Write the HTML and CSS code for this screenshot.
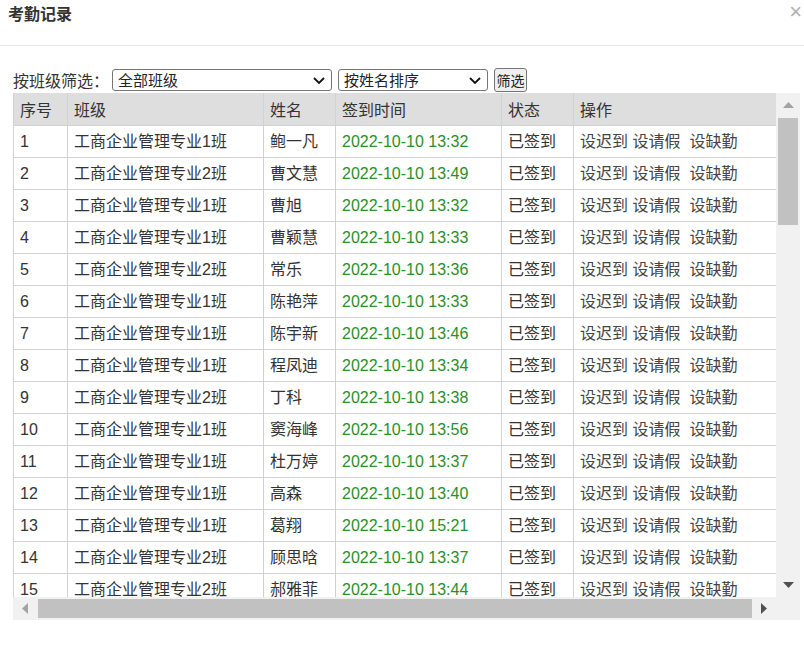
FILE: index.html
```
<!DOCTYPE html>
<html lang="zh-CN">

<head>
    <meta charset="UTF-8">
    <meta name="viewport" content="width=device-width, initial-scale=1.0">
    <title>考勤记录</title>
    <link rel="stylesheet" href="styles.css">
</head>

<body>
    <div class="dialog-head">
        <h3 class="dialog-title">考勤记录</h3>
        <span class="dialog-close">×</span>
    </div>
    <div class="dialog-body">
        <form class="filter-bar">
            <label for="classSelect">按班级筛选：</label>
            <div class="select-wrap">
                <select id="classSelect" class="select-class">
                    <option>全部班级</option>
                    <option>工商企业管理专业1班</option>
                    <option>工商企业管理专业2班</option>
                </select>
                <svg width="12" height="7" viewBox="0 0 12 7"><path d="M1 1l5 5 5-5" fill="none" stroke="#111" stroke-width="1.8"/></svg>
            </div>
            <div class="select-wrap">
                <select class="select-sort">
                    <option>按姓名排序</option>
                    <option>按签到时间排序</option>
                </select>
                <svg width="12" height="7" viewBox="0 0 12 7"><path d="M1 1l5 5 5-5" fill="none" stroke="#111" stroke-width="1.8"/></svg>
            </div>
            <button type="submit" class="btn-filter">筛选</button>
        </form>

        <div class="grid-box">
            <div class="grid-view">
                <table class="record-table">
                    <colgroup>
                        <col class="c-no">
                        <col class="c-class">
                        <col class="c-name">
                        <col class="c-time">
                        <col class="c-state">
                        <col class="c-ops">
                    </colgroup>
                    <thead>
                        <tr><th>序号</th><th>班级</th><th>姓名</th><th>签到时间</th><th>状态</th><th>操作</th></tr>
                    </thead>
                    <tbody>
                        <tr><td>1</td><td>工商企业管理专业1班</td><td>鲍一凡</td><td class="time">2022-10-10 13:32</td><td>已签到</td><td class="ops"><a href="#">设迟到</a> <a href="#">设请假</a>&nbsp; <a href="#">设缺勤</a></td></tr>
                        <tr><td>2</td><td>工商企业管理专业2班</td><td>曹文慧</td><td class="time">2022-10-10 13:49</td><td>已签到</td><td class="ops"><a href="#">设迟到</a> <a href="#">设请假</a>&nbsp; <a href="#">设缺勤</a></td></tr>
                        <tr><td>3</td><td>工商企业管理专业1班</td><td>曹旭</td><td class="time">2022-10-10 13:32</td><td>已签到</td><td class="ops"><a href="#">设迟到</a> <a href="#">设请假</a>&nbsp; <a href="#">设缺勤</a></td></tr>
                        <tr><td>4</td><td>工商企业管理专业1班</td><td>曹颖慧</td><td class="time">2022-10-10 13:33</td><td>已签到</td><td class="ops"><a href="#">设迟到</a> <a href="#">设请假</a>&nbsp; <a href="#">设缺勤</a></td></tr>
                        <tr><td>5</td><td>工商企业管理专业2班</td><td>常乐</td><td class="time">2022-10-10 13:36</td><td>已签到</td><td class="ops"><a href="#">设迟到</a> <a href="#">设请假</a>&nbsp; <a href="#">设缺勤</a></td></tr>
                        <tr><td>6</td><td>工商企业管理专业1班</td><td>陈艳萍</td><td class="time">2022-10-10 13:33</td><td>已签到</td><td class="ops"><a href="#">设迟到</a> <a href="#">设请假</a>&nbsp; <a href="#">设缺勤</a></td></tr>
                        <tr><td>7</td><td>工商企业管理专业1班</td><td>陈宇新</td><td class="time">2022-10-10 13:46</td><td>已签到</td><td class="ops"><a href="#">设迟到</a> <a href="#">设请假</a>&nbsp; <a href="#">设缺勤</a></td></tr>
                        <tr><td>8</td><td>工商企业管理专业1班</td><td>程凤迪</td><td class="time">2022-10-10 13:34</td><td>已签到</td><td class="ops"><a href="#">设迟到</a> <a href="#">设请假</a>&nbsp; <a href="#">设缺勤</a></td></tr>
                        <tr><td>9</td><td>工商企业管理专业2班</td><td>丁科</td><td class="time">2022-10-10 13:38</td><td>已签到</td><td class="ops"><a href="#">设迟到</a> <a href="#">设请假</a>&nbsp; <a href="#">设缺勤</a></td></tr>
                        <tr><td>10</td><td>工商企业管理专业1班</td><td>窦海峰</td><td class="time">2022-10-10 13:56</td><td>已签到</td><td class="ops"><a href="#">设迟到</a> <a href="#">设请假</a>&nbsp; <a href="#">设缺勤</a></td></tr>
                        <tr><td>11</td><td>工商企业管理专业1班</td><td>杜万婷</td><td class="time">2022-10-10 13:37</td><td>已签到</td><td class="ops"><a href="#">设迟到</a> <a href="#">设请假</a>&nbsp; <a href="#">设缺勤</a></td></tr>
                        <tr><td>12</td><td>工商企业管理专业1班</td><td>高森</td><td class="time">2022-10-10 13:40</td><td>已签到</td><td class="ops"><a href="#">设迟到</a> <a href="#">设请假</a>&nbsp; <a href="#">设缺勤</a></td></tr>
                        <tr><td>13</td><td>工商企业管理专业1班</td><td>葛翔</td><td class="time">2022-10-10 15:21</td><td>已签到</td><td class="ops"><a href="#">设迟到</a> <a href="#">设请假</a>&nbsp; <a href="#">设缺勤</a></td></tr>
                        <tr><td>14</td><td>工商企业管理专业2班</td><td>顾思晗</td><td class="time">2022-10-10 13:37</td><td>已签到</td><td class="ops"><a href="#">设迟到</a> <a href="#">设请假</a>&nbsp; <a href="#">设缺勤</a></td></tr>
                        <tr><td>15</td><td>工商企业管理专业2班</td><td>郝雅菲</td><td class="time">2022-10-10 13:44</td><td>已签到</td><td class="ops"><a href="#">设迟到</a> <a href="#">设请假</a>&nbsp; <a href="#">设缺勤</a></td></tr>
                    </tbody>
                </table>
            </div>

            <div class="vscroll">
                <div class="sb-btn">
                    <svg width="11" height="6" viewBox="0 0 11 6"><polygon points="0,6 5.5,0 11,6" fill="#a3a3a3"/></svg>
                </div>
                <div class="sb-thumb-v"></div>
                <div class="sb-space"></div>
                <div class="sb-btn">
                    <svg width="11" height="6" viewBox="0 0 11 6"><polygon points="0,0 11,0 5.5,6" fill="#505050"/></svg>
                </div>
            </div>
            <div class="hscroll">
                <div class="sb-btn">
                    <svg width="6" height="11" viewBox="0 0 6 11"><polygon points="6,0 6,11 0,5.5" fill="#a3a3a3"/></svg>
                </div>
                <div class="sb-thumb-h"></div>
                <div class="sb-btn">
                    <svg width="6" height="11" viewBox="0 0 6 11"><polygon points="0,0 6,5.5 0,11" fill="#505050"/></svg>
                </div>
            </div>
            <div class="sb-corner"></div>
        </div>
    </div>
</body>

</html>
```

FILE: styles.css
```
body {
    margin: 0;
    font-family: "Liberation Sans", "Noto Sans CJK SC", sans-serif;
    color: #333;
    background-color: #fff;
}

/* dialog header */
.dialog-head {
    height: 45px;
    border-bottom: 1px solid #e5e5e5;
    display: flex;
    justify-content: space-between;
    padding: 0 2px 0 8px;
}

.dialog-title {
    margin: 0;
    font-size: 16px;
    line-height: 30px;
    font-weight: bold;
    color: #333;
}

.dialog-close {
    font-size: 22px;
    line-height: 24px;
    color: #b0b0b0;
    cursor: pointer;
}

.dialog-body {
    padding: 22px 4px 0 13px;
}

/* filter bar */
.filter-bar {
    display: flex;
    align-items: center;
    height: 24px;
    margin: 0;
}

.filter-bar label {
    font-size: 16px;
    color: #333;
    margin-right: 3px;
}

.select-wrap {
    position: relative;
    margin-right: 6px;
}

.select-wrap select {
    appearance: none;
    -webkit-appearance: none;
    display: block;
    height: 22px;
    border: 1px solid #767676;
    border-radius: 3px;
    padding: 0 0 0 5px;
    font-family: "Liberation Sans", "Noto Sans CJK SC", sans-serif;
    font-size: 15px;
    color: #222;
    background-color: #fff;
}

.select-class {
    width: 220px;
}

.select-sort {
    width: 150px;
}

.select-wrap svg {
    position: absolute;
    right: 7px;
    top: 8px;
    pointer-events: none;
}

.btn-filter {
    width: 33px;
    height: 24px;
    padding: 0;
    border: 1px solid #767676;
    border-radius: 3px;
    background-color: #efefef;
    font-family: "Liberation Sans", "Noto Sans CJK SC", sans-serif;
    font-size: 14px;
    color: #222;
}

/* table with scrollbars */
.grid-box {
    display: grid;
    grid-template-columns: 763px 24px;
    grid-template-rows: 504px 23px;
    margin-top: 1px;
}

.grid-view {
    overflow: hidden;
}

.record-table {
    border-collapse: collapse;
    table-layout: fixed;
    width: 770px;
    font-size: 16px;
}

.c-no { width: 54px; }
.c-class { width: 196px; }
.c-name { width: 72px; }
.c-time { width: 166px; }
.c-state { width: 72px; }
.c-ops { width: 210px; }

.record-table th,
.record-table td {
    height: 32px;
    box-sizing: border-box;
    padding: 6px 6px 0;
    vertical-align: top;
    line-height: 20px;
    text-align: left;
    font-weight: normal;
    white-space: nowrap;
    border: 1px solid #d2d2d2;
}

.record-table th {
    background-color: #dedede;
    border-top: none;
    padding-top: 8px;
    color: #333;
}

.record-table .time {
    color: #2a8f2a;
    font-family: "Liberation Sans Narrow", "Liberation Sans", sans-serif;
}

.ops a {
    color: #444;
    text-decoration: none;
}

.vscroll {
    background-color: #f1f1f1;
    display: flex;
    flex-direction: column;
    align-items: center;
}

.sb-btn {
    width: 24px;
    height: 24px;
    display: flex;
    align-items: center;
    justify-content: center;
    flex-shrink: 0;
}

.sb-thumb-v {
    width: 20px;
    height: 107px;
    margin-top: 1px;
    background-color: #c1c1c1;
}

.sb-space {
    flex: 1;
}

.hscroll {
    background-color: #f1f1f1;
    display: flex;
    align-items: center;
}

.hscroll .sb-btn {
    height: 23px;
}

.sb-thumb-h {
    flex: 1;
    height: 19px;
    margin-left: 1px;
    background-color: #c1c1c1;
}

.sb-corner {
    background-color: #f1f1f1;
}
```
